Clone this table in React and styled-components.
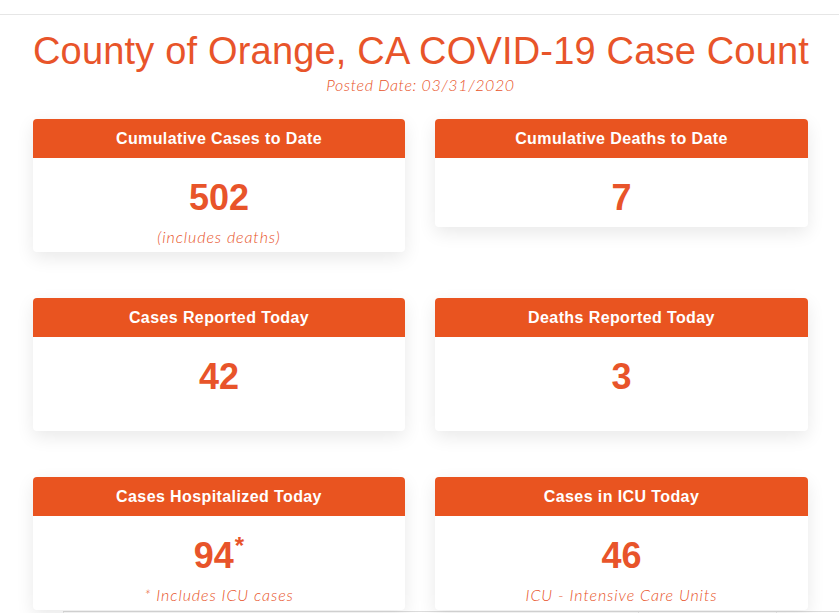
import React from 'react';
import styled, { createGlobalStyle } from 'styled-components';

const GlobalStyle = createGlobalStyle`
  body {
    margin: 0;
    background: #fff;
    font-family: "Liberation Sans", Arial, sans-serif;
  }
`

const TopBar = styled.div`
  height: 14px;
  border-bottom: 1px solid #e6e6e6;
`
const Page = styled.div`
  padding: 0 31px 0 33px;
`
const Title = styled.h1`
  margin: 16px 0 0;
  text-align: center;
  white-space: nowrap;
  font-family: "Liberation Sans", Arial, sans-serif;
  font-weight: normal;
  font-size: 38px;
  letter-spacing: 0.18px;
  line-height: 40px;
  color: #e8542a;
`
const Posted = styled.div`
  margin-top: 4px;
  text-align: center;
  font-family: Lato, "Open Sans", sans-serif;
  font-style: italic;
  font-weight: 300;
  font-size: 16px;
  letter-spacing: 0.6px;
  line-height: 20px;
  color: #e8542a;
`
const Grid = styled.div`
  display: grid;
  grid-template-columns: 372px 373px;
  column-gap: 30px;
  row-gap: 46px;
  align-items: start;
  margin-top: 24px;
`
const Card = styled.div`
  background: #fff;
  border-radius: 4px;
  overflow: hidden;
  box-shadow: 0 6px 18px rgba(0, 0, 0, 0.09);
`
const CardHeader = styled.div`
  height: 39px;
  display: flex;
  align-items: center;
  justify-content: center;
  background: #e95420;
  color: #fff;
  font-weight: bold;
  font-size: 16px;
  letter-spacing: 0.4px;
`
const CardBody = styled.div`
  padding: 22px 10px 0;
  text-align: center;
`
const Number = styled.div`
  font-weight: bold;
  font-size: 36px;
  line-height: 36px;
  color: #e8542a;
  margin-bottom: 11px;
  sup {
    font-size: 24px;
    line-height: 0;
    vertical-align: 14px;
    margin-left: 1px;
  }
`
const Note = styled.div`
  margin: 4px 0 5px;
  height: 20px;
  font-family: Lato, "Open Sans", sans-serif;
  font-style: italic;
  font-weight: 300;
  font-size: 16px;
  letter-spacing: 0.9px;
  line-height: 20px;
  color: #e8542a;
`
const TableTop = styled.div`
  display: grid;
  grid-template-columns: 575px 139px;
  margin: 1px 0 0 63px;
  height: 4px;
  border-top: 1px solid #dcdcdc;
  & > div {
    border-left: 1px solid #dcdcdc;
  }
  & > div:last-child {
    border-right: 1px solid #dcdcdc;
  }
`

const cards = [
  { title: 'Cumulative Cases to Date', value: '502', note: '(includes deaths)' },
  { title: 'Cumulative Deaths to Date', value: '7' },
  { title: 'Cases Reported Today', value: '42', note: '' },
  { title: 'Deaths Reported Today', value: '3', note: '' },
  { title: 'Cases Hospitalized Today', value: '94', star: true, note: '* Includes ICU cases' },
  { title: 'Cases in ICU Today', value: '46', note: 'ICU - Intensive Care Units' },
];

export default function App() {
  return (
    <>
      <GlobalStyle />
      <TopBar />
      <Page>
        <Title>County of Orange, CA COVID-19 Case Count</Title>
        <Posted>Posted Date: 03/31/2020</Posted>
        <Grid>
          {cards.map((c) => (
            <Card key={c.title}>
              <CardHeader>{c.title}</CardHeader>
              <CardBody>
                <Number>
                  {c.value}
                  {c.star && <sup>*</sup>}
                </Number>
                {c.note !== undefined && <Note>{c.note}</Note>}
              </CardBody>
            </Card>
          ))}
        </Grid>
      </Page>
      <TableTop>
        <div />
        <div />
      </TableTop>
    </>
  )
}
